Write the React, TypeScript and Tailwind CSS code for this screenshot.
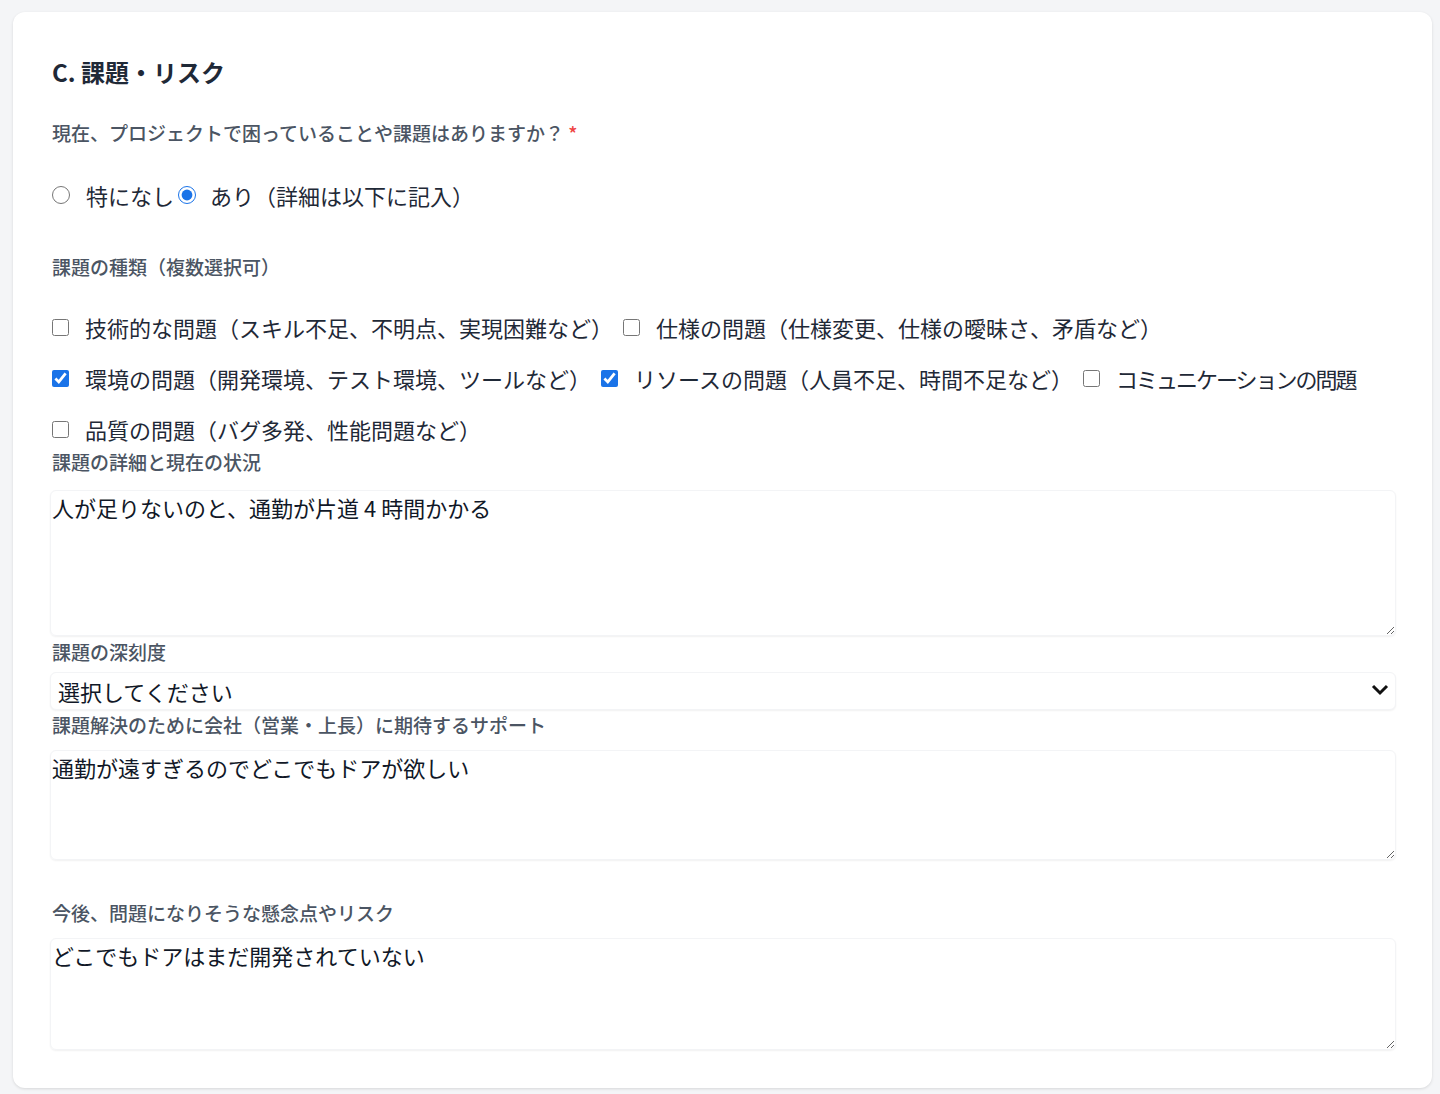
import React from "react";

const font = { fontFamily: '"Noto Sans CJK JP", "Noto Sans", sans-serif' };

function Check({ label, checked, tight }: { label: string; checked?: boolean; tight?: boolean }) {
  return (
    <label className="flex items-center gap-4 h-8">
      <input
        type="checkbox"
        defaultChecked={checked}
        className="w-[17px] h-[17px] m-0 accent-[#1a73e8]"
      />
      <span
        className={
          tight
            ? "text-[22px] leading-8 text-[#1f2937] tracking-[-2px]"
            : "text-[22px] leading-8 text-[#1f2937]"
        }
      >
        {label}
      </span>
    </label>
  );
}

export default function App() {
  return (
    <div
      className="min-h-[1094px] bg-[#f4f5f7] pl-[13px] pr-[8px] pt-[12px] pb-[6px]"
      style={font}
    >
      <div className="bg-white rounded-xl shadow-[0_1px_3px_rgba(0,0,0,0.12)] pt-[44px] pb-[38px] pl-[39px] pr-[38px] flex flex-col">
        <h2 className="text-[24px] leading-8 font-semibold text-[#1f2937]">
          C. 課題・リスク
        </h2>

        <div className="mt-[31px] text-[19px] leading-7 text-[#4b5563] font-medium">
          現在、プロジェクトで困っていることや課題はありますか？{" "}
          <span className="text-[#ef4444]">*</span>
        </div>

        <div className="mt-[32px] flex items-center gap-1 h-8">
          <label className="flex items-center gap-4">
            <input type="radio" name="r" className="w-[18px] h-[18px] m-0 accent-[#1a73e8]" />
            <span className="text-[22px] leading-8 text-[#1f2937]">特になし</span>
          </label>
          <label className="flex items-center gap-[14px]">
            <input
              type="radio"
              name="r"
              defaultChecked
              className="w-[18px] h-[18px] m-0 accent-[#1a73e8]"
            />
            <span className="text-[22px] leading-8 text-[#1f2937]">あり（詳細は以下に記入）</span>
          </label>
        </div>

        <div className="mt-[42px] text-[19px] leading-7 text-[#4b5563] font-medium">
          課題の種類（複数選択可）
        </div>

        <div className="mt-[30px] flex flex-wrap gap-x-[10px] gap-y-[19px]">
          <Check label="技術的な問題（スキル不足、不明点、実現困難など）" />
          <Check label="仕様の問題（仕様変更、仕様の曖昧さ、矛盾など）" />
          <Check label="環境の問題（開発環境、テスト環境、ツールなど）" checked />
          <Check label="リソースの問題（人員不足、時間不足など）" checked />
          <Check label="コミュニケーションの問題" tight />
          <Check label="品質の問題（バグ多発、性能問題など）" />
        </div>

        <div className="mt-[3px] text-[19px] leading-7 text-[#4b5563] font-medium">
          課題の詳細と現在の状況
        </div>
        <textarea
          className="mt-[14px] -mx-[2px] h-[146px] rounded-md border border-[#f3f4f6] shadow-[0_1px_2px_rgba(0,0,0,0.06)] pl-[1px] pt-[2px] text-[22px] leading-7 text-[#111827] outline-none"
          defaultValue="人が足りないのと、通勤が片道 4 時間かかる"
        />

        <div className="mt-[2px] text-[19px] leading-7 text-[#4b5563] font-medium">
          課題の深刻度
        </div>
        <div className="relative mt-[6px] -mx-[2px]">
          <select className="appearance-none w-full h-[38px] rounded-md border border-[#f3f4f6] shadow-[0_1px_2px_rgba(0,0,0,0.06)] bg-white pl-[7px] text-[22px] text-[#111827] outline-none">
            <option>選択してください</option>
          </select>
          <svg
            className="pointer-events-none absolute right-[7px] top-[11px]"
            width="18"
            height="14"
            viewBox="0 0 18 14"
          >
            <path d="M2 3 L9 10 L16 3" fill="none" stroke="#111" strokeWidth="3" />
          </svg>
        </div>

        <div className="mt-[1px] text-[19px] leading-7 text-[#4b5563] font-medium">
          課題解決のために会社（営業・上長）に期待するサポート
        </div>
        <textarea
          className="mt-[11px] -mx-[2px] h-[110px] rounded-md border border-[#f3f4f6] shadow-[0_1px_2px_rgba(0,0,0,0.06)] pl-[1px] pt-[2px] text-[22px] leading-7 text-[#111827] outline-none"
          defaultValue="通勤が遠すぎるのでどこでもドアが欲しい"
        />

        <div className="mt-[39px] text-[19px] leading-7 text-[#4b5563] font-medium">
          今後、問題になりそうな懸念点やリスク
        </div>
        <textarea
          className="mt-[11px] -mx-[2px] h-[112px] rounded-md border border-[#f3f4f6] shadow-[0_1px_2px_rgba(0,0,0,0.06)] pl-[1px] pt-[2px] text-[22px] leading-7 text-[#111827] outline-none"
          defaultValue="どこでもドアはまだ開発されていない"
        />
      </div>
    </div>
  );
}
